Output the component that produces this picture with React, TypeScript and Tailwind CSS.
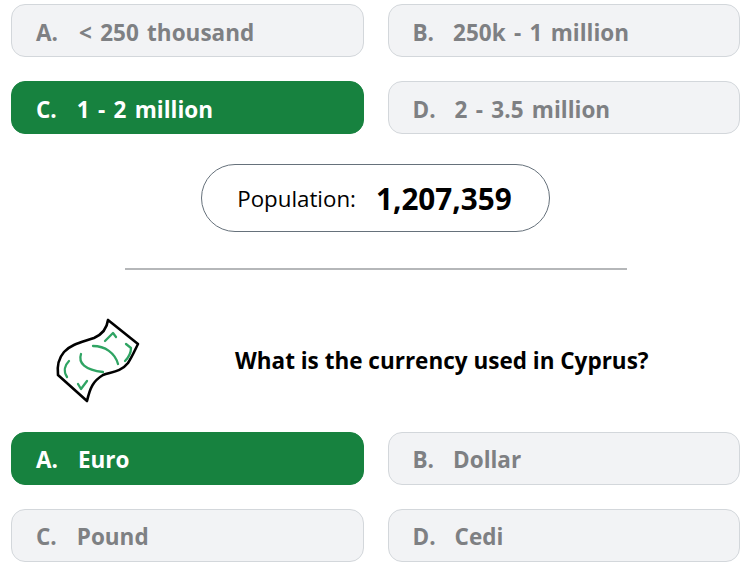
function Option({ letter, text, on, gap, top }: { letter: string; text: string; on?: boolean; gap: string; top?: boolean }) {
  return (
    <div
      className={
        "h-[53px] rounded-[14px] border flex items-center pl-[24px] text-[22.5px] font-bold [word-spacing:2.5px] " +
        (top ? "pt-[5px] " : "pt-[3px] ") +
        gap +
        " " +
        (on ? "bg-[#17823f] border-[#17823f] text-white" : "bg-[#f2f3f5] border-[#d3d7db] text-[#7e8083]")
      }
    >
      <span>{letter}</span>
      <span>{text}</span>
    </div>
  );
}

function Bill() {
  return (
    <svg width="130" height="115" viewBox="0 0 130 115" fill="none" strokeLinecap="round" strokeLinejoin="round">
      <path
        d="M77 19 C76 27 72 33 63 37 C52 41 40 43 33 51 C27 58 26 66 27 74 L56 100 C59 87 62 80 72 74 C80 71 90 71 97 62 C101 56 104 49 107 43 Z"
        fill="#fff"
        stroke="#000"
        strokeWidth="2.6"
      />
      <g stroke="#2fa463" strokeWidth="2.3">
        <path d="M62 45 C74 45 84 52 87 63" />
        <path d="M50 53 C47 62 54 69 72 71" />
        <path d="M38 60 C34 64 32 70 36 76" />
        <path d="M74 40 L82 32 L85 36" />
        <path d="M95 43 L100 47 C100 52 97 57 94 60" />
        <path d="M47 83 L50 88 L56 80" />
      </g>
    </svg>
  );
}

export default function App() {
  return (
    <div className="w-[752px] h-[570px] bg-white overflow-hidden font-['Open_Sans','Noto_Sans',sans-serif]">
      <div className="grid grid-cols-2 gap-x-6 gap-y-6 pl-[11px] pr-3 pt-1">
        <Option top letter="A." text="< 250 thousand" gap="gap-[21px]" />
        <Option top letter="B." text="250k - 1 million" gap="gap-[19px]" />
        <Option top on letter="C." text="1 - 2 million" gap="gap-[20px]" />
        <Option top letter="D." text="2 - 3.5 million" gap="gap-[19px]" />
      </div>
      <div className="flex justify-center mt-[30px] pr-px">
        <div className="w-[349px] h-[68px] rounded-[34px] border border-[#66717b] flex items-center justify-center gap-[20px] text-black pt-[2px] pr-[2px]">
          <span className="text-[22.3px] font-normal">Population:</span>
          <span className="text-[29.7px] font-bold">1,207,359</span>
        </div>
      </div>
      <div className="ml-[125px] w-[502px] h-[2px] bg-[#b5b7b9] mt-9" />
      <div className="flex h-[115px] mt-[31px] pl-[31px]">
        <Bill />
        <div className="ml-[74px] flex items-center text-[22.5px] font-bold text-black h-[120px]">
          What is the currency used in Cyprus?
        </div>
      </div>
      <div className="grid grid-cols-2 gap-x-6 gap-y-6 pl-[11px] pr-3 mt-[16px]">
        <Option letter="A." text="Euro" on gap="gap-[20px]" />
        <Option letter="B." text="Dollar" gap="gap-[19px]" />
        <Option letter="C." text="Pound" gap="gap-[20px]" />
        <Option letter="D." text="Cedi" gap="gap-[19px]" />
      </div>
    </div>
  );
}
